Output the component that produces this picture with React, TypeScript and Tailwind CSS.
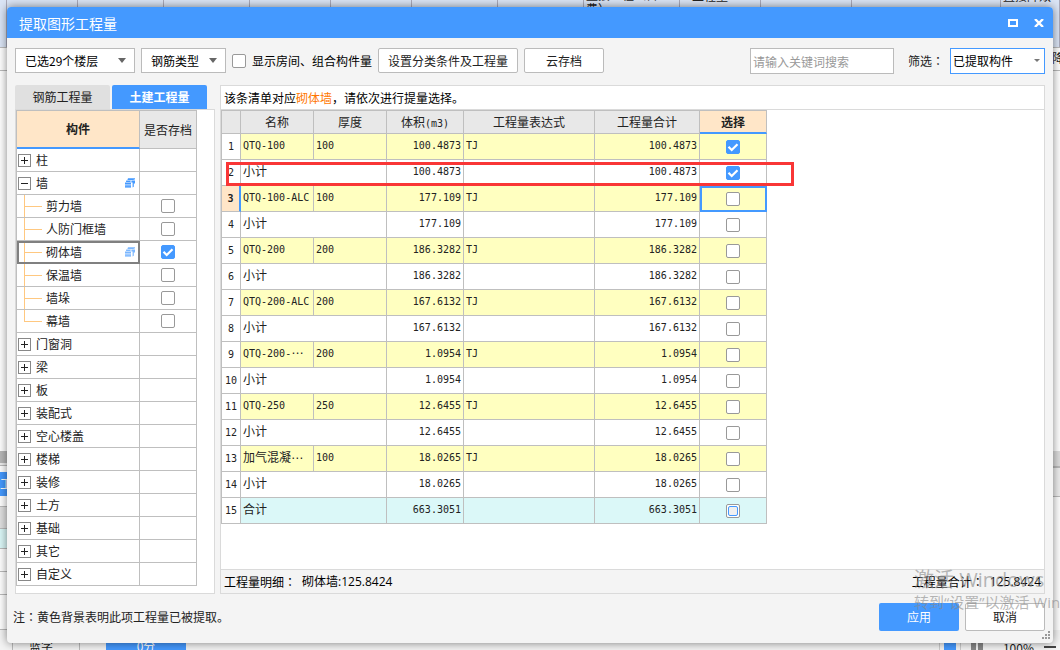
import clsx from "clsx";
import { useId } from "react";

type TreeNode = {
  name: string;
  kind: "closed" | "open" | "leaf";
  linked?: boolean;
  checked?: boolean;
  selected?: boolean;
  last?: boolean;
};

const treeNodes: TreeNode[] = [
  { name: "柱", kind: "closed" },
  { name: "墙", kind: "open", linked: true },
  { name: "剪力墙", kind: "leaf" },
  { name: "人防门框墙", kind: "leaf" },
  { name: "砌体墙", kind: "leaf", linked: true, checked: true, selected: true },
  { name: "保温墙", kind: "leaf" },
  { name: "墙垛", kind: "leaf" },
  { name: "幕墙", kind: "leaf", last: true },
  { name: "门窗洞", kind: "closed" },
  { name: "梁", kind: "closed" },
  { name: "板", kind: "closed" },
  { name: "装配式", kind: "closed" },
  { name: "空心楼盖", kind: "closed" },
  { name: "楼梯", kind: "closed" },
  { name: "装修", kind: "closed" },
  { name: "土方", kind: "closed" },
  { name: "基础", kind: "closed" },
  { name: "其它", kind: "closed" },
  { name: "自定义", kind: "closed" },
];

type QuantityRow = {
  type: "item" | "subtotal" | "total";
  name: string;
  cut?: boolean;
  thickness?: string;
  value: string;
  checked?: boolean;
  active?: boolean;
};

const quantityRows: QuantityRow[] = [
  { type: "item", name: "QTQ-100", thickness: "100", value: "100.4873", checked: true },
  { type: "subtotal", name: "小计", value: "100.4873", checked: true },
  { type: "item", name: "QTQ-100-ALC", thickness: "100", value: "177.109", active: true },
  { type: "subtotal", name: "小计", value: "177.109" },
  { type: "item", name: "QTQ-200", thickness: "200", value: "186.3282" },
  { type: "subtotal", name: "小计", value: "186.3282" },
  { type: "item", name: "QTQ-200-ALC", thickness: "200", value: "167.6132" },
  { type: "subtotal", name: "小计", value: "167.6132" },
  { type: "item", name: "QTQ-200-", cut: true, thickness: "200", value: "1.0954" },
  { type: "subtotal", name: "小计", value: "1.0954" },
  { type: "item", name: "QTQ-250", thickness: "250", value: "12.6455" },
  { type: "subtotal", name: "小计", value: "12.6455" },
  { type: "item", name: "加气混凝", cut: true, thickness: "100", value: "18.0265" },
  { type: "subtotal", name: "小计", value: "18.0265" },
  { type: "total", name: "合计", value: "663.3051" },
];

const mono = "font-['DejaVu_Sans_Mono','Noto_Sans_CJK_SC',monospace] text-[10px]";

function CheckBox({ checked = false, partial = false, label, id }: { checked?: boolean; partial?: boolean; label?: string; id?: string }) {
  return (
    <span className="inline-grid size-3.5 place-items-center align-middle">
      <input
        id={id}
        type="checkbox"
        defaultChecked={checked}
        aria-label={label}
        className="peer size-3.5 appearance-none rounded-xs border border-[#999] bg-white [grid-area:1/1] checked:border-[#4499ff] checked:bg-[#4499ff]"
      />
      <svg viewBox="0 0 14 14" className="pointer-events-none hidden size-3.5 [grid-area:1/1] peer-checked:block">
        <path d="M2.5 6.8l3.2 3.2 5.8-5.8" fill="none" stroke="#fff" strokeWidth="2.2" />
      </svg>
      {partial && (
        <span className="pointer-events-none size-2.5 rounded-xs border border-[#4499ff] bg-[#f0f0f0] [grid-area:1/1]" />
      )}
    </span>
  );
}

function Select({ value, label, className, small }: { value: string; label: string; className: string; small?: boolean }) {
  return (
    <span className="relative inline-flex">
      <select aria-label={label} className={clsx("appearance-none bg-white text-xs text-black", className)}>
        <option>{value}</option>
      </select>
      {small ? (
        <svg viewBox="0 0 6 4" className="pointer-events-none absolute top-[11px] right-[5px] h-1 w-1.5 fill-[#777]">
          <path d="M0 0h6L3 3z" />
        </svg>
      ) : (
        <svg viewBox="0 0 8 5" className="pointer-events-none absolute top-2.5 right-[9px] h-[5px] w-2 fill-[#666]">
          <path d="M0 0h8L4 5z" />
        </svg>
      )}
    </span>
  );
}

// Full-width colon that sits in the middle of its box
function Colon() {
  return <span className="font-['Noto_Sans_CJK_TC',sans-serif]">：</span>;
}

function StackIcon({ faded }: { faded?: boolean }) {
  return (
    <svg viewBox="0 0 10 10" className={clsx("size-2.5 fill-[#4499ff]", faded && "opacity-70")}>
      <path d="M3 .2h7v1.2H9L8.5 2H2.4z" />
      <path d="M1.2 2.6h4.6L5.4 4H1z" />
      <path d="M0 4.5h6v1.6H0z" />
      <path d="M0 6.5h6v1.2H0z" />
      <path d="M0 8.1h6v1.5H0z" />
      <path d="M6.4 2.6H10v3H8.8v3.2l-1.2.8V4.4H6.4z" />
    </svg>
  );
}

function TreeCell({ node }: { node: TreeNode }) {
  return (
    <div className="flex h-[22px] items-center">
      {node.kind === "leaf" ? (
        <span className="flex flex-col self-stretch pl-[7px] pr-1">
          <span className="h-3 w-[18px] border-b border-l border-[#ffc880]" />
          {!node.last && <span className="flex-1 border-l border-[#ffc880]" />}
        </span>
      ) : (
        <button aria-label={node.name} className="ml-px mr-[5px]">
          <svg viewBox="0 0 13 13" className="size-[13px] fill-white" shapeRendering="crispEdges">
            <path d="M.5.5h12v12H.5z" stroke="#888" />
            <path d={node.kind === "open" ? "M3 6.5h7" : "M3 6.5h7M6.5 3v7"} stroke="#222" />
          </svg>
        </button>
      )}
      <span>{node.name}</span>
      {node.linked && (
        <span className="ml-auto mr-1">
          <StackIcon faded={node.selected} />
        </span>
      )}
    </div>
  );
}

function ComponentTree() {
  return (
    <table className="w-[181px] table-fixed border-separate border-spacing-0 border-l border-t border-[#bfbfbf] text-xs text-[#222]">
      <thead>
        <tr className="h-[38px]">
          <th className="w-[123px] border-b-2 border-r border-b-[#4499ff] border-r-[#bfbfbf] bg-[#ffe6c8] p-0 font-bold">构件</th>
          <th className="w-[57px] border-b border-r border-[#bfbfbf] bg-[#e8e8e8] p-0 font-normal">是否存档</th>
        </tr>
      </thead>
      <tbody>
        {treeNodes.map((node) => (
          <tr key={node.name} className="h-[23px]">
            <td
              className={clsx(
                "border-b border-r border-[#bfbfbf] p-0",
                node.selected && "outline-2 -outline-offset-2 outline-[#808080]"
              )}
            >
              <TreeCell node={node} />
            </td>
            <td className="border-b border-r border-[#bfbfbf] p-0 text-center leading-none">
              {node.kind === "leaf" && <CheckBox checked={node.checked} label={node.name} />}
            </td>
          </tr>
        ))}
      </tbody>
    </table>
  );
}

function QuantityTable() {
  const head = "border-b border-r border-[#bfbfbf] p-0 font-normal";
  const cell = "border-b border-r border-[#bfbfbf] px-0.5 pt-0 leading-4";

  return (
    <table className="w-[546px] table-fixed border-separate border-spacing-0 border-l border-t border-[#bfbfbf] text-xs text-[#222]">
      <thead>
        <tr className="h-[23px] bg-[#e8e8e8]">
          <th aria-label="序号" className={clsx(head, "w-[19px]")} />
          <th className={clsx(head, "w-[73px]")}>名称</th>
          <th className={clsx(head, "w-[73px]")}>厚度</th>
          <th className={clsx(head, "w-[77px]")}>
            体积<span className={mono}>(m3)</span>
          </th>
          <th className={clsx(head, "w-[131px]")}>工程量表达式</th>
          <th className={clsx(head, "w-[105px]")}>工程量合计</th>
          <th className="w-[67px] border-b-2 border-r border-b-[#4499ff] border-r-[#bfbfbf] bg-[#ffe6c8] p-0 font-bold">选择</th>
        </tr>
      </thead>
      <tbody>
        {quantityRows.map((row, index) => (
          <tr
            key={index}
            className={clsx("h-[26px]", row.type === "item" && "bg-[#ffffc0]", row.type === "total" && "bg-[#dbf8f8]")}
          >
            <td
              className={clsx(
                "border-b border-b-[#bfbfbf] p-0 text-center",
                mono,
                row.active ? "border-r-2 border-r-[#4499ff] bg-[#ffe6c8] font-bold" : "border-r border-r-[#bfbfbf] bg-white"
              )}
            >
              {index + 1}
            </td>
            {row.type === "item" ? (
              <>
                <td className={clsx(cell, "whitespace-nowrap", /^[A-Z]/.test(row.name) ? [mono, "pb-0.5"] : "pb-1")}>
                  {row.name}
                  {row.cut && <span className="inline-block font-['DejaVu_Sans',sans-serif] text-xs leading-none">⋯</span>}
                </td>
                <td className={clsx(cell, mono, "pb-0.5")}>{row.thickness}</td>
              </>
            ) : (
              <td colSpan={2} className={clsx(cell, "pb-1")}>{row.name}</td>
            )}
            <td className={clsx(cell, mono, "pb-0.5 text-right")}>{row.value}</td>
            <td className={clsx(cell, mono, "pb-0.5")}>{row.type === "item" && "TJ"}</td>
            <td className={clsx(cell, mono, "pb-0.5 text-right")}>{row.value}</td>
            <td
              className={clsx(
                "border-b border-r border-[#bfbfbf] p-0 text-center leading-none",
                row.active && "outline-2 -outline-offset-2 outline-[#4499ff]"
              )}
            >
              <CheckBox checked={row.checked} partial={row.type === "total"} label={`选择第${index + 1}行`} />
            </td>
          </tr>
        ))}
      </tbody>
    </table>
  );
}

// The workbook window that sits under the dialog
function Workbook() {
  const line = "border-b border-[#bbb]";
  return (
    <div aria-hidden="true" className="flex h-full flex-col bg-white text-xs leading-3 text-[#222]">
      <div className="flex h-[47px] bg-[#dbe5f6] *:shrink-0 *:overflow-hidden *:border-r *:border-[#aab]">
        <div className="w-[7px]" />
        <div className="w-[71px]" />
        <div className="w-[86px]" />
        <div className="w-[86px]" />
        <div className="w-[81px]" />
        <div className="w-[81px]" />
        <div className="w-[86px]" />
        <div className="w-[86px]" />
        <div className="w-24 pl-0.5 leading-[14px]">
          <span className="-mt-3 block whitespace-nowrap">直接工程（含</span>
          <span className="block">费）</span>
        </div>
        <div className="w-[81px] pl-3"><span className="-mt-2.5 block">工程量</span></div>
        <div className="w-[91px]" />
        <div className="w-[149px]" />
        <div className="flex-1 pl-0.5"><span className="-mt-2.5 block whitespace-nowrap">直接降效</span></div>
      </div>
      <div className="flex flex-1 justify-between">
        <div className="flex w-20 flex-col">
          <div className={clsx(line, "h-6 border-t")} />
          <div className="flex-1" />
          <div className="h-3 bg-[#b8b8b8]" />
          <div className="h-[3px] border-b border-[#bbb] bg-[#eee]" />
          <div className="h-1.5" />
          <div className="h-6 bg-[#4499ff] pt-1.5 text-white">工</div>
          <div className={clsx(line, "h-[11px]")} />
          <div className={clsx(line, "h-[22px] bg-[#e0e0e0]")} />
          <div className={clsx(line, "h-5 bg-[#dbf8f8]")} />
          <div className={clsx(line, "h-[23px]")} />
          <div className={clsx(line, "h-[23px]")} />
          <div className={clsx(line, "h-[35px]")} />
        </div>
        <div className="flex w-2 flex-col overflow-hidden">
          <div className={clsx(line, "h-6 border-t pt-1")}>降</div>
          <div className="flex-1" />
          <div className="h-[15px] bg-[#ddd]" />
          <div className="h-[31px] border-b border-t-2 border-[#bbb] bg-[#eee]" />
          <div className="h-[133px]" />
        </div>
      </div>
      <div className="flex h-5 items-start overflow-hidden bg-[#f4f4f4] *:shrink-0">
        <div className="ml-3 h-5 w-[68px] border-x border-[#bbb] pt-2.5 pl-4">蓝字</div>
        <div className="ml-[26px] h-5 w-20 bg-[#4499ff] pt-2.5 text-center text-white">0分</div>
        <div className="ml-auto h-5 w-[22px] border-x border-[#ccc] px-1"><div className="h-5 bg-[#4499ff]" /></div>
        <div className="ml-2.5 h-5 w-3 border-x-5 border-[#888]" />
        <div className="ml-5 pt-2.5 text-xs">100%</div>
        <div className="mr-1 ml-2.5 mt-4 h-0.5 w-3 bg-[#444]" />
      </div>
    </div>
  );
}

export default function App() {
  const roomsId = useId();

  return (
    <div className="relative h-screen overflow-hidden font-['Noto_Sans_CJK_SC',sans-serif]">
      <Workbook />

      <section
        aria-label="提取图形工程量"
        className="absolute inset-[7px] flex flex-col rounded bg-[#f4f4f4] text-xs text-[#222] shadow-[0_0_10px_rgba(0,0,0,0.5)]"
      >
        <header className="flex h-[31px] items-center rounded-t bg-[#4499ff] px-3 text-white">
          <h1 className="text-sm">提取图形工程量</h1>
          <div className="-mr-[3px] ml-auto flex gap-4">
            <button aria-label="最大化">
              <svg viewBox="0 0 10 8" className="h-2 w-2.5 fill-none stroke-white"><path d="M1 1h8v6H1z" strokeWidth="2" /></svg>
            </button>
            <button aria-label="关闭">
              <svg viewBox="0 0 10 8" className="h-2 w-2.5 fill-none stroke-white"><path d="M1 0l8 8M9 0L1 8" strokeWidth="2.4" /></svg>
            </button>
          </div>
        </header>

        {/* Toolbar */}
        <div className="flex h-[47px] items-start px-2 pt-2.5">
          <Select label="楼层" value="已选29个楼层" className="h-[25px] w-[120px] border border-[#bbb] pl-[9px]" />
          <span className="w-1.5" />
          <Select label="钢筋类型" value="钢筋类型" className="h-[25px] w-[85px] border border-[#bbb] pl-[9px]" />
          <div className="ml-1.5 flex h-[25px] items-center gap-1.5 text-black">
            <CheckBox id={roomsId} />
            <label htmlFor={roomsId}>显示房间、组合构件量</label>
          </div>
          <button className="ml-1.5 h-[25px] w-[140px] rounded-xs border border-[#bbb] bg-white">设置分类条件及工程量</button>
          <button className="ml-1.5 h-[25px] w-20 rounded-xs border border-[#bbb] bg-white">云存档</button>
          <input
            type="text"
            aria-label="关键词搜索"
            placeholder="请输入关键词搜索"
            className="ml-auto h-[26px] w-36 border border-[#bbb] bg-white px-0.5 placeholder:text-[#999]"
          />
          <span className="ml-3.5 w-[42px] whitespace-nowrap leading-[26px]">筛选<Colon /></span>
          <Select label="筛选" value="已提取构件" small className="h-[26px] w-[95px] border border-[#4499ff] pl-0.5" />
        </div>

        <main className="flex min-h-0 flex-1 gap-[5px] px-2">
          <div className="flex w-[200px] shrink-0 flex-col">
            <div role="tablist" className="flex h-6 gap-0.5">
              <button role="tab" aria-selected="false" className="w-[95px] rounded-t-xs bg-[#e0e0e0]">钢筋工程量</button>
              <button role="tab" aria-selected="true" className="w-[95px] rounded-t-xs bg-[#4499ff] font-bold text-white">土建工程量</button>
            </div>
            <div className="flex-1 border border-[#dadada] bg-white">
              <ComponentTree />
            </div>
          </div>

          <div className="flex flex-1 flex-col border border-[#dadada] bg-white">
            <p className="h-6 border-b border-[#dadada] px-[3px] leading-6 text-black">
              该条清单对应<span className="text-[#ff7700]">砌体墙</span>，请依次进行提量选择。
            </p>
            <div className="relative flex-1">
              <QuantityTable />
              {/* Callout round the first subtotal */}
              <div className="pointer-events-none absolute top-[52px] left-[5px] h-6 w-[568px] border-3 border-[#f93636]" />
            </div>
            <div className="flex h-6 items-center justify-between border-t border-[#dadada] bg-[#f4f4f4] px-[3px] text-black">
              <span className="flex gap-1.5">
                <span>工程量明细<Colon /></span>
                <span className="font-['Open_Sans','Noto_Sans_CJK_SC',sans-serif]">砌体墙:125.8424</span>
              </span>
              <span className="flex gap-1.5">
                <span>工程量合计<Colon /></span>
                <span className="font-['Open_Sans','Noto_Sans_CJK_SC',sans-serif]">125.8424</span>
              </span>
            </div>
          </div>
        </main>

        <footer className="flex h-[49px] items-start gap-1.5 pt-[9px] pr-2 pl-1.5">
          <p className="mr-auto leading-7">注<Colon />黄色背景表明此项工程量已被提取。</p>
          <button className="h-7 w-20 rounded-xs bg-[#4499ff] text-white">应用</button>
          <button className="h-7 w-20 rounded-xs border border-[#bbb] bg-white">取消</button>
        </footer>

        <svg viewBox="0 0 8 8" className="absolute right-[3px] bottom-1 size-2 fill-[#999]">
          <path d="M6 0h2v2H6zM3 3h2v2H3zM6 3h2v2H6zM0 6h2v2H0zM3 6h2v2H3zM6 6h2v2H6z" />
        </svg>
      </section>

      {/* System activation notice */}
      <div className="pointer-events-none absolute right-0 bottom-9 w-[146px] whitespace-nowrap font-['Open_Sans','Noto_Sans_CJK_SC',sans-serif] text-[#888]/60">
        <p className="text-xl leading-5">激活 Windows</p>
        <p className="text-[15px] leading-6">转到“设置”以激活 Windows</p>
      </div>
    </div>
  );
}
